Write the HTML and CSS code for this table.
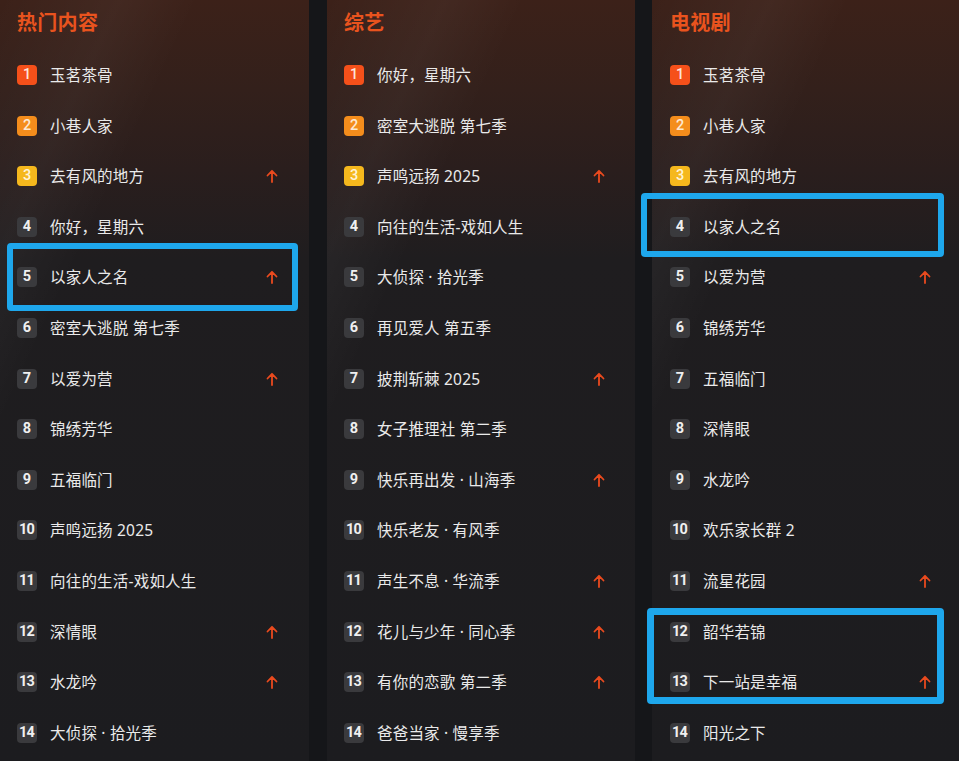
FILE: index.html
```html
<!DOCTYPE html>
<html lang="zh-CN">
<head>
<meta charset="utf-8">
<link rel="stylesheet" href="styles.css">
</head>
<body>
<div class="board">
  <section class="card card-1">
    <h2 class="title">热门内容</h2>
    <ol class="list">
      <li class="row"><span class="rank r1">1</span><span class="name">玉茗茶骨</span><span class="up"></span></li>
      <li class="row"><span class="rank r2">2</span><span class="name">小巷人家</span><span class="up"></span></li>
      <li class="row"><span class="rank r3">3</span><span class="name">去有风的地方</span><span class="up on"><svg viewBox="0 0 12 14"><path d="M6 13V2M1.5 6.5L6 1.8l4.5 4.7"/></svg></span></li>
      <li class="row"><span class="rank">4</span><span class="name">你好，星期六</span><span class="up"></span></li>
      <li class="row"><span class="rank">5</span><span class="name">以家人之名</span><span class="up on"><svg viewBox="0 0 12 14"><path d="M6 13V2M1.5 6.5L6 1.8l4.5 4.7"/></svg></span></li>
      <li class="row"><span class="rank">6</span><span class="name">密室大逃脱 第七季</span><span class="up"></span></li>
      <li class="row"><span class="rank">7</span><span class="name">以爱为营</span><span class="up on"><svg viewBox="0 0 12 14"><path d="M6 13V2M1.5 6.5L6 1.8l4.5 4.7"/></svg></span></li>
      <li class="row"><span class="rank">8</span><span class="name">锦绣芳华</span><span class="up"></span></li>
      <li class="row"><span class="rank">9</span><span class="name">五福临门</span><span class="up"></span></li>
      <li class="row"><span class="rank">10</span><span class="name">声鸣远扬 2025</span><span class="up"></span></li>
      <li class="row"><span class="rank">11</span><span class="name">向往的生活-戏如人生</span><span class="up"></span></li>
      <li class="row"><span class="rank">12</span><span class="name">深情眼</span><span class="up on"><svg viewBox="0 0 12 14"><path d="M6 13V2M1.5 6.5L6 1.8l4.5 4.7"/></svg></span></li>
      <li class="row"><span class="rank">13</span><span class="name">水龙吟</span><span class="up on"><svg viewBox="0 0 12 14"><path d="M6 13V2M1.5 6.5L6 1.8l4.5 4.7"/></svg></span></li>
      <li class="row"><span class="rank">14</span><span class="name">大侦探 · 拾光季</span><span class="up"></span></li>
    </ol>
    <div class="mark mark-a"></div>
  </section>

  <section class="card card-2">
    <h2 class="title">综艺</h2>
    <ol class="list">
      <li class="row"><span class="rank r1">1</span><span class="name">你好，星期六</span><span class="up"></span></li>
      <li class="row"><span class="rank r2">2</span><span class="name">密室大逃脱 第七季</span><span class="up"></span></li>
      <li class="row"><span class="rank r3">3</span><span class="name">声鸣远扬 2025</span><span class="up on"><svg viewBox="0 0 12 14"><path d="M6 13V2M1.5 6.5L6 1.8l4.5 4.7"/></svg></span></li>
      <li class="row"><span class="rank">4</span><span class="name">向往的生活-戏如人生</span><span class="up"></span></li>
      <li class="row"><span class="rank">5</span><span class="name">大侦探 · 拾光季</span><span class="up"></span></li>
      <li class="row"><span class="rank">6</span><span class="name">再见爱人 第五季</span><span class="up"></span></li>
      <li class="row"><span class="rank">7</span><span class="name">披荆斩棘 2025</span><span class="up on"><svg viewBox="0 0 12 14"><path d="M6 13V2M1.5 6.5L6 1.8l4.5 4.7"/></svg></span></li>
      <li class="row"><span class="rank">8</span><span class="name">女子推理社 第二季</span><span class="up"></span></li>
      <li class="row"><span class="rank">9</span><span class="name">快乐再出发 · 山海季</span><span class="up on"><svg viewBox="0 0 12 14"><path d="M6 13V2M1.5 6.5L6 1.8l4.5 4.7"/></svg></span></li>
      <li class="row"><span class="rank">10</span><span class="name">快乐老友 · 有风季</span><span class="up"></span></li>
      <li class="row"><span class="rank">11</span><span class="name">声生不息 · 华流季</span><span class="up on"><svg viewBox="0 0 12 14"><path d="M6 13V2M1.5 6.5L6 1.8l4.5 4.7"/></svg></span></li>
      <li class="row"><span class="rank">12</span><span class="name">花儿与少年 · 同心季</span><span class="up on"><svg viewBox="0 0 12 14"><path d="M6 13V2M1.5 6.5L6 1.8l4.5 4.7"/></svg></span></li>
      <li class="row"><span class="rank">13</span><span class="name">有你的恋歌 第二季</span><span class="up on"><svg viewBox="0 0 12 14"><path d="M6 13V2M1.5 6.5L6 1.8l4.5 4.7"/></svg></span></li>
      <li class="row"><span class="rank">14</span><span class="name">爸爸当家 · 慢享季</span><span class="up"></span></li>
    </ol>
  </section>

  <section class="card card-3">
    <h2 class="title">电视剧</h2>
    <ol class="list">
      <li class="row"><span class="rank r1">1</span><span class="name">玉茗茶骨</span><span class="up"></span></li>
      <li class="row"><span class="rank r2">2</span><span class="name">小巷人家</span><span class="up"></span></li>
      <li class="row"><span class="rank r3">3</span><span class="name">去有风的地方</span><span class="up"></span></li>
      <li class="row"><span class="rank">4</span><span class="name">以家人之名</span><span class="up"></span></li>
      <li class="row"><span class="rank">5</span><span class="name">以爱为营</span><span class="up on"><svg viewBox="0 0 12 14"><path d="M6 13V2M1.5 6.5L6 1.8l4.5 4.7"/></svg></span></li>
      <li class="row"><span class="rank">6</span><span class="name">锦绣芳华</span><span class="up"></span></li>
      <li class="row"><span class="rank">7</span><span class="name">五福临门</span><span class="up"></span></li>
      <li class="row"><span class="rank">8</span><span class="name">深情眼</span><span class="up"></span></li>
      <li class="row"><span class="rank">9</span><span class="name">水龙吟</span><span class="up"></span></li>
      <li class="row"><span class="rank">10</span><span class="name">欢乐家长群 2</span><span class="up"></span></li>
      <li class="row"><span class="rank">11</span><span class="name">流星花园</span><span class="up on"><svg viewBox="0 0 12 14"><path d="M6 13V2M1.5 6.5L6 1.8l4.5 4.7"/></svg></span></li>
      <li class="row"><span class="rank">12</span><span class="name">韶华若锦</span><span class="up"></span></li>
      <li class="row"><span class="rank">13</span><span class="name">下一站是幸福</span><span class="up on"><svg viewBox="0 0 12 14"><path d="M6 13V2M1.5 6.5L6 1.8l4.5 4.7"/></svg></span></li>
      <li class="row"><span class="rank">14</span><span class="name">阳光之下</span><span class="up"></span></li>
    </ol>
    <div class="mark mark-b"></div>
    <div class="mark mark-c"></div>
  </section>
</div>
</body>
</html>
```

FILE: styles.css
```css
* { box-sizing: border-box; }
html, body {
  margin: 0;
  padding: 0;
  width: 959px;
  height: 761px;
  overflow: hidden;
  background: #151619;
  font-family: "Noto Sans CJK SC", "Noto Sans", sans-serif;
}
.board {
  display: flex;
  gap: 18px;
  height: 761px;
}
.card {
  position: relative;
  height: 761px;
  padding: 8px 0 0 17px;
  background:
    linear-gradient(115deg, rgba(255,255,255,0) 0%, rgba(255,255,255,0.035) 18%, rgba(255,255,255,0) 30%),
    linear-gradient(180deg, #3c2119 0%, #33201b 90px, #2a1e1d 170px, #1f1d1f 260px, #1c1c1f 100%);
}
.card-1 { width: 309px; }
.card-2 { width: 308px; }
.card-3 { width: 307px; margin-left: -1px; padding-left: 18px; }
.title {
  margin: 0;
  height: 41.7px;
  line-height: 28px;
  font-size: 20px;
  font-weight: 700;
  color: #e9531e;
  letter-spacing: 0.3px;
}
.list {
  list-style: none;
  margin: 0;
  padding: 0;
  width: 261px;
}
.row {
  display: grid;
  grid-template-columns: 20px 1fr 12px;
  align-items: center;
  column-gap: 13px;
  height: 50.6px;
}
.rank {
  width: 20px;
  height: 20px;
  border-radius: 4px;
  background: #3a3a3d;
  color: #f0f0f0;
  font-family: "Roboto", "Noto Sans", sans-serif;
  font-size: 14.5px;
  font-weight: 700;
  letter-spacing: -0.8px;
  text-indent: -0.8px;
  line-height: 20px;
  text-align: center;
}
.r1 { background: #f5501a; color: #fde4d8; font-weight: 500; }
.r2 { background: #f48d1c; color: #fde9d2; font-weight: 500; }
.r3 { background: #f5b81d; color: #fff4d8; font-weight: 500; }
.name {
  color: #eaeaea;
  font-family: "Noto Sans", "Noto Sans CJK SC", sans-serif;
  font-size: 15.5px;
  line-height: 20px;
  white-space: nowrap;
  letter-spacing: 0.2px;
}
.up { width: 12px; height: 14px; display: block; }
.up svg { width: 12px; height: 14px; display: block; }
.up svg path {
  fill: none;
  stroke: #ea4a1e;
  stroke-width: 1.8;
  stroke-linecap: round;
  stroke-linejoin: round;
}
.mark {
  position: absolute;
  border: 6px solid #1ea7ec;
  border-radius: 4px;
}
.mark-a { left: 7px; top: 243px; width: 291px; height: 68px; }
.mark-b { left: -11px; top: 193px; width: 303px; height: 64px; }
.mark-c { left: -5px; top: 608px; width: 297px; height: 96px; border-width: 7px; }
```
